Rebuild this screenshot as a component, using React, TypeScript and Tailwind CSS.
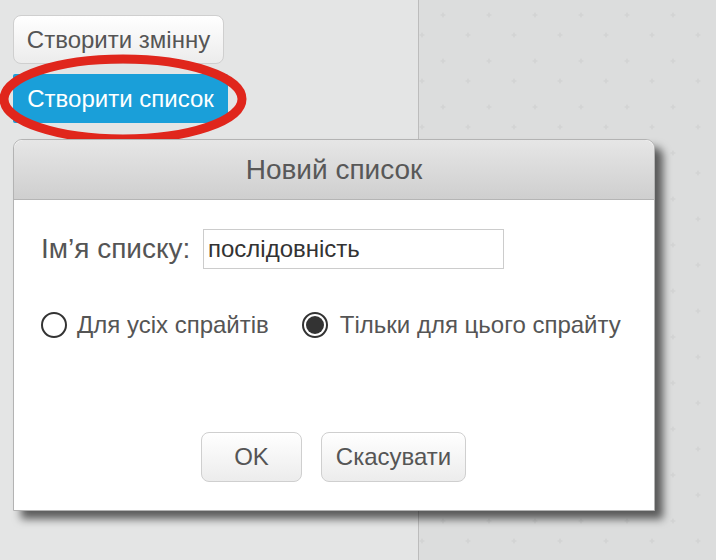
import React from 'react';

function PlusGrid() {
  return (
    <svg className="absolute inset-0 w-full h-full" aria-hidden>
      <defs>
        <pattern id="plus" x="0" y="0" width="46" height="46" patternUnits="userSpaceOnUse">
          <path d="M21.5 15h5M24 12.5v5" stroke="#d3d4d4" strokeWidth="1.6" />
          <path d="M0.5 35h5M3 32.5v5" stroke="#d3d4d4" strokeWidth="1.6" />
        </pattern>
      </defs>
      <rect width="100%" height="100%" fill="url(#plus)" />
    </svg>
  );
}

function Radio({ checked }: { checked?: boolean }) {
  return (
    <span className="w-[26px] h-[26px] rounded-full border-2 border-[#333] bg-white flex items-center justify-center shrink-0">
      {checked && <span className="w-[18px] h-[18px] rounded-full bg-[#333]" />}
    </span>
  );
}

const greyBtn =
  'rounded-[8px] border border-[#cfcfcf] bg-gradient-to-b from-white to-[#ececec] text-[#555] leading-none';

export default function App() {
  return (
    <div className="relative w-[716px] h-[560px] flex overflow-hidden font-['Liberation_Sans',Arial,sans-serif]">
      {/* left palette */}
      <div className="w-[419px] shrink-0 bg-[#e4e5e5] border-r border-[#bcbcbc] pt-[15px] pl-[13px] flex flex-col items-start gap-[10px]">
        <button className={`${greyBtn} w-[211px] h-[49px] text-[24px]`}>Створити змінну</button>
        <button className="w-[215px] h-[49px] bg-[#1a9fd9] text-white text-[24px] leading-none rounded-[2px]">
          Створити список
        </button>
      </div>

      {/* scripts area */}
      <div className="relative flex-1 bg-[#dcdddd]">
        <PlusGrid />
      </div>

      {/* red highlight */}
      <svg className="absolute left-0 top-0 w-[260px] h-[160px]" aria-hidden>
        <ellipse cx="123" cy="99" rx="119" ry="40" fill="none" stroke="#e0261c" strokeWidth="9" />
      </svg>

      {/* dialog */}
      <div className="absolute left-[13px] top-[139px] w-[642px] h-[372px] flex flex-col bg-white border border-[#b3b3b3] rounded-t-[9px] shadow-[8px_8px_9px_rgba(0,0,0,0.6)]">
        <div className="h-[60px] shrink-0 rounded-t-[9px] bg-gradient-to-b from-[#e6e6e6] to-[#cfcfcf] border-b border-[#b5b5b5] flex items-center justify-center text-[28px] text-[#585858]">
          Новий список
        </div>
        <div className="flex-1 flex flex-col pl-[27px]">
          <div className="flex items-center mt-[29px] h-[40px]">
            <span className="text-[28px] text-[#555] w-[162px]">Ім’я списку:</span>
            <div className="w-[301px] h-[40px] border border-[#cccccc] flex items-center pl-[4px] text-[24px] text-[#333]">
              послідовність
            </div>
          </div>
          <div className="flex items-center mt-[38px] text-[24px] text-[#555]">
            <Radio />
            <span className="ml-[10px]">Для усіх спрайтів</span>
            <span className="ml-[33px]">
              <Radio checked />
            </span>
            <span className="ml-[12px]">Тільки для цього спрайту</span>
          </div>
          <div className="flex justify-center gap-[19px] mt-[89px] pr-[28px]">
            <button className={`${greyBtn} w-[101px] h-[50px] text-[24px]`}>OK</button>
            <button className={`${greyBtn} w-[145px] h-[50px] text-[24px]`}>Скасувати</button>
          </div>
        </div>
      </div>
    </div>
  );
}
